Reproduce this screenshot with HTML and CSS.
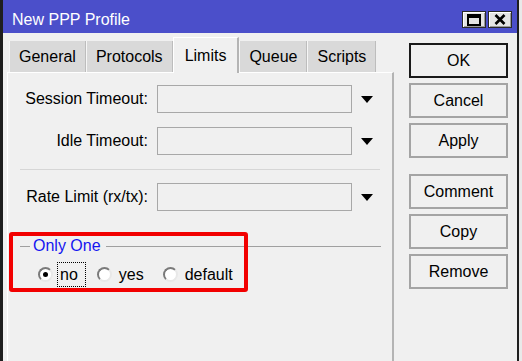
FILE: index.html
```html
<!DOCTYPE html>
<html lang="en">

<head>
    <meta charset="UTF-8">
    <meta name="viewport" content="width=device-width, initial-scale=1.0">
    <title>New PPP Profile</title>
    <link rel="stylesheet" href="styles.css">
</head>

<body>
    <div class="window">
        <div class="titlebar">
            <span class="title">New PPP Profile</span>
            <div class="title-buttons">
                <span class="title-btn">
                    <svg width="14" height="12" viewBox="0 0 14 12">
                        <rect x="1" y="1" width="12" height="10" fill="none" stroke="#000" stroke-width="2" />
                        <rect x="1" y="1" width="12" height="3" fill="#000" />
                    </svg>
                </span>
                <span class="title-btn">
                    <svg width="12" height="11" viewBox="0 0 12 11">
                        <path d="M1.5 1 L10.5 10 M10.5 1 L1.5 10" stroke="#000" stroke-width="2.6" />
                    </svg>
                </span>
            </div>
        </div>

        <div class="window-body">
            <div class="main">
                <div class="tabs">
                    <div class="tab">General</div>
                    <div class="tab">Protocols</div>
                    <div class="tab active">Limits</div>
                    <div class="tab">Queue</div>
                    <div class="tab">Scripts</div>
                </div>

                <div class="panel">
                    <div class="field-row">
                        <label class="field-label">Session Timeout:</label>
                        <div class="field-input"></div>
                        <span class="arrow"></span>
                    </div>
                    <div class="field-row">
                        <label class="field-label">Idle Timeout:</label>
                        <div class="field-input"></div>
                        <span class="arrow"></span>
                    </div>

                    <div class="separator"></div>

                    <div class="field-row">
                        <label class="field-label">Rate Limit (rx/tx):</label>
                        <div class="field-input"></div>
                        <span class="arrow"></span>
                    </div>

                    <div class="group">
                        <div class="group-title">
                            <span class="group-line short"></span>
                            <span class="group-text">Only One</span>
                            <span class="group-line"></span>
                        </div>
                        <div class="radios">
                            <div class="radio-item">
                                <span class="radio checked"></span>
                                <span class="radio-label focused">no</span>
                            </div>
                            <div class="radio-item wide">
                                <span class="radio"></span>
                                <span class="radio-label">yes</span>
                            </div>
                            <div class="radio-item">
                                <span class="radio"></span>
                                <span class="radio-label">default</span>
                            </div>
                        </div>
                    </div>
                </div>
            </div>

            <div class="buttons">
                <button class="btn default">OK</button>
                <button class="btn">Cancel</button>
                <button class="btn">Apply</button>
                <button class="btn spaced">Comment</button>
                <button class="btn">Copy</button>
                <button class="btn">Remove</button>
            </div>
        </div>

        <div class="highlight"></div>
    </div>
</body>

</html>
```

FILE: styles.css
```css
body {
    margin: 0;
    font-family: "Liberation Sans", Arial, sans-serif;
    font-size: 16px;
    background-color: #e9e9e9;
    overflow: hidden;
}

.window {
    position: relative;
    width: 514px;
    height: 361px;
    border-left: 3px solid #1e1e1e;
    border-right: 2px solid #1e1e1e;
    background-color: #f0f0f0;
    display: flex;
    flex-direction: column;
}

/* title bar */
.titlebar {
    height: 33px;
    box-sizing: border-box;
    padding: 6px 5px 0 9px;
    background-color: #4b4fca;
    display: flex;
    align-items: center;
    justify-content: space-between;
}

.title {
    color: white;
    font-size: 16px;
}

.title-buttons {
    display: flex;
    gap: 2px;
}

.title-btn {
    width: 24px;
    height: 17px;
    box-sizing: border-box;
    background-color: #e4e4e4;
    border: 1px solid #2a2a2a;
    box-shadow: inset 1px 1px 0 #fff, inset -1px -1px 0 #9a9a9a;
    display: flex;
    align-items: center;
    justify-content: center;
}

/* body */
.window-body {
    flex: 1;
    display: flex;
    padding-left: 4px;
    gap: 15px;
}

.main {
    width: 387px;
    display: flex;
    flex-direction: column;
}

.tabs {
    display: flex;
    align-items: flex-end;
    margin-top: 4px;
    padding-left: 2px;
    height: 35px;
}

.tab {
    height: 31px;
    box-sizing: border-box;
    padding: 0 9px;
    background-color: #d9d9d9;
    border-left: 1px solid #f6f6f6;
    border-right: 1px solid #bdbdbd;
    display: flex;
    align-items: center;
}

.tab.active {
    height: 36px;
    margin-bottom: -1px;
    position: relative;
    z-index: 1;
    padding: 0 11px;
    background-color: #f0f0f0;
    border-left: 1px solid #fff;
    border-top: 1px solid #fff;
    border-right: 2px solid #b4b4b4;
}

.panel {
    flex: 1;
    border-top: 1px solid #fff;
    border-left: 1px solid #fff;
    border-right: 2px solid #b4b4b4;
    padding-top: 12px;
}

.field-row {
    display: flex;
    align-items: center;
    height: 28px;
    margin-bottom: 14px;
}

.field-label {
    width: 140px;
    text-align: right;
    margin-right: 9px;
}

.field-input {
    width: 195px;
    height: 28px;
    box-sizing: border-box;
    border: 1px solid #a8a8a8;
    background-color: #f0f0f0;
    margin-right: 9px;
}

.arrow {
    width: 0;
    height: 0;
    border-left: 6px solid transparent;
    border-right: 6px solid transparent;
    border-top: 7px solid #000;
}

.separator {
    height: 1px;
    width: 360px;
    margin: 0 0 13px 12px;
    background-color: #d6d6d6;
}

.group {
    margin-top: 26px;
}

.group-title {
    display: flex;
    align-items: center;
    height: 18px;
    padding-left: 12px;
    width: 361px;
}

.group-line {
    flex: 1;
    height: 1px;
    background-color: #a0a0a0;
}

.group-line.short {
    flex: none;
    width: 10px;
}

.group-text {
    color: #1515f0;
    margin: 0 5px 0 3px;
}

.radios {
    display: flex;
    align-items: center;
    margin-top: 7px;
    padding-left: 30px;
    height: 25px;
}

.radio-item {
    display: flex;
    align-items: center;
    margin-right: 11px;
}

.radio-item.wide {
    margin-right: 15px;
}

.radio {
    width: 15px;
    height: 15px;
    box-sizing: border-box;
    border-radius: 50%;
    border: 2px solid;
    border-color: #7a7a7a #e8e8e8 #e8e8e8 #7a7a7a;
    background-color: #fff;
    margin-right: 4px;
    display: flex;
    align-items: center;
    justify-content: center;
}

.radio.checked::after {
    content: "";
    width: 5px;
    height: 5px;
    border-radius: 50%;
    background-color: #000;
}

.radio-label {
    height: 25px;
    box-sizing: border-box;
    border: 1px dotted transparent;
    padding: 0 3px 0 2px;
    display: flex;
    align-items: center;
}

.radio-label.focused {
    border-color: #000;
    padding-right: 7px;
}

/* right buttons */
.buttons {
    width: 99px;
    padding-top: 10px;
    display: flex;
    flex-direction: column;
    gap: 5px;
}

.btn {
    height: 35px;
    font-family: inherit;
    font-size: 16px;
    color: #000;
    background-color: #f0f0f0;
    border: 2px solid #a4a4a4;
    padding: 0;
}

.btn.default {
    border-color: #1a1a1a;
}

.btn.spaced {
    margin-top: 11px;
}

/* annotation box */
.highlight {
    position: absolute;
    left: 6px;
    top: 232px;
    width: 231px;
    height: 52px;
    border: 4px solid #f20000;
    border-radius: 3px;
}
```
